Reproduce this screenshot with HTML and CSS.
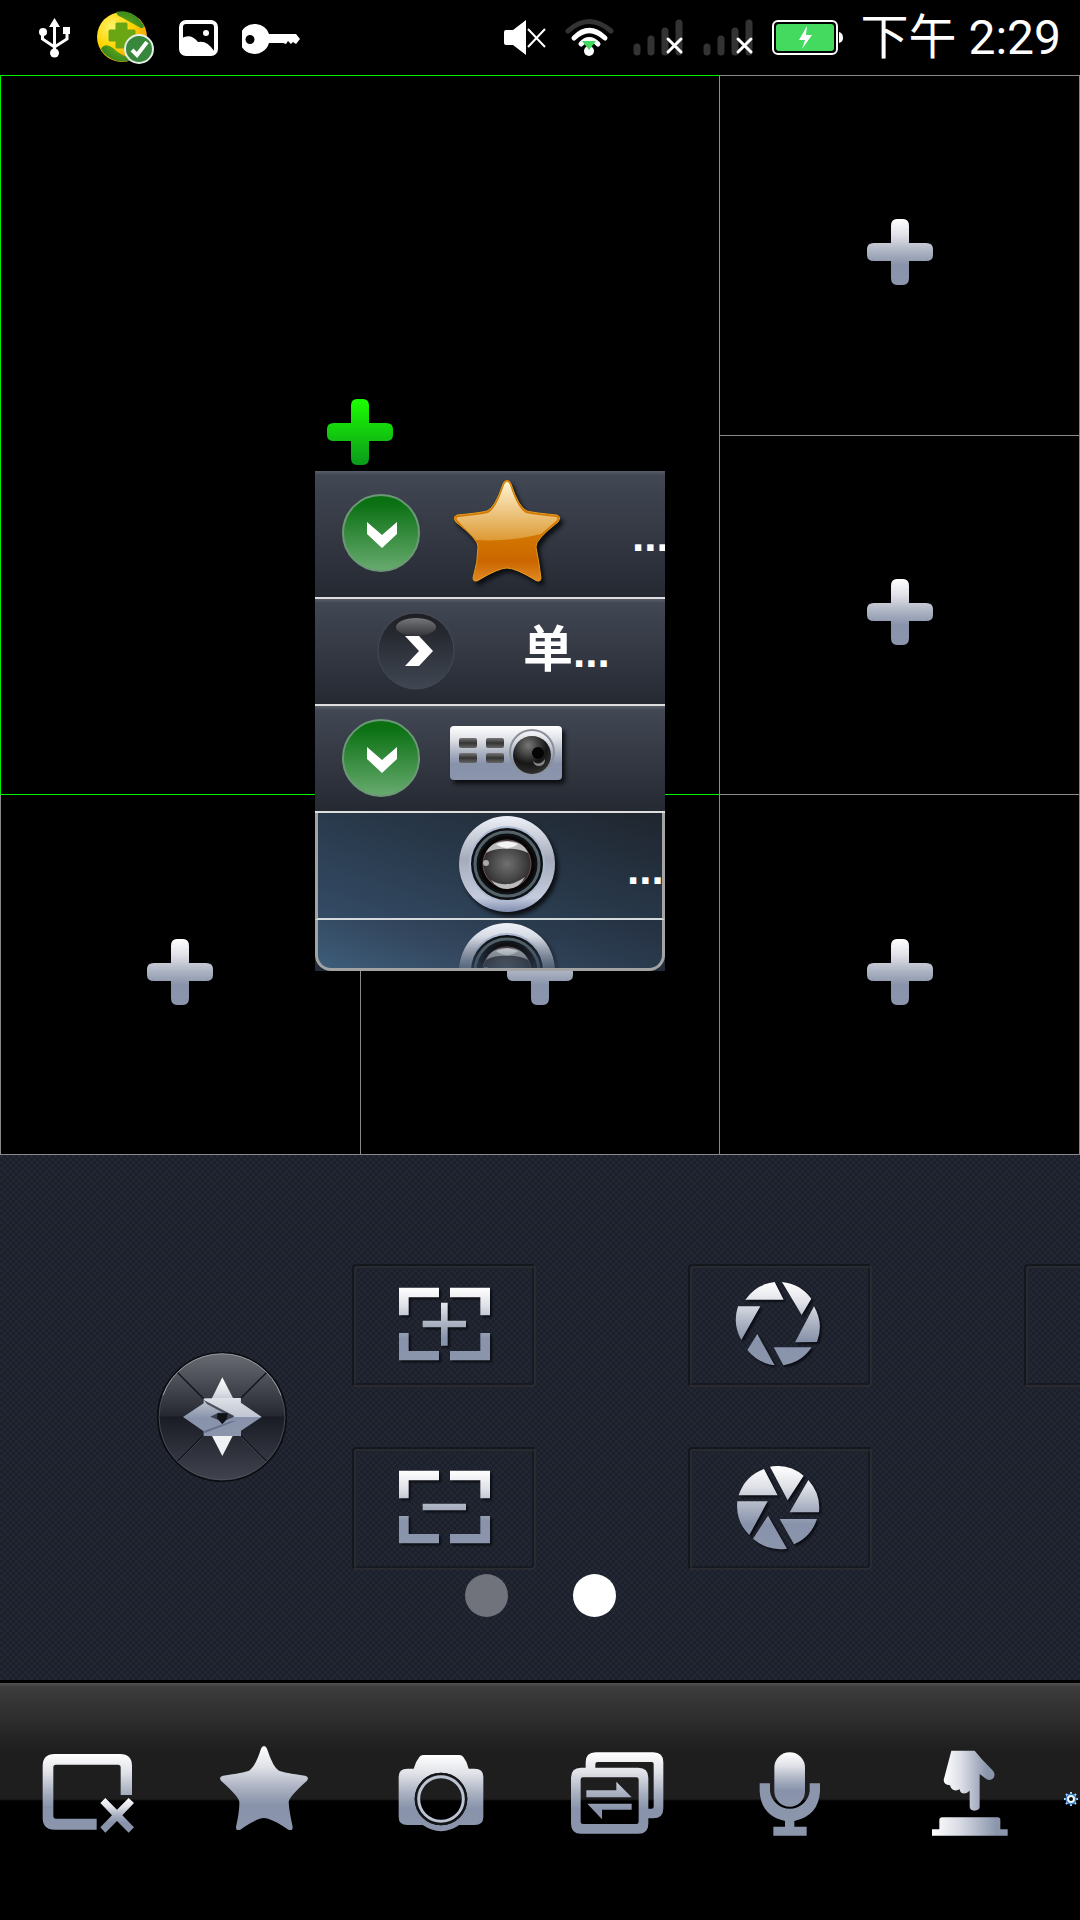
FILE: index.html
```html
<!DOCTYPE html>
<html lang="zh-CN">
<head>
<meta charset="utf-8">
<meta name="viewport" content="width=device-width, initial-scale=1">
<title>实时预览</title>
<link rel="stylesheet" href="styles.css">
</head>
<body>
<svg class="defs" width="0" height="0" aria-hidden="true">
  <defs>
    <linearGradient id="metal" x1="0" y1="0" x2="0" y2="1"><stop offset="0" stop-color="#fff"/><stop offset=".25" stop-color="#dfe1e7"/><stop offset=".5" stop-color="#aab1c1"/><stop offset=".7" stop-color="#8893ab"/><stop offset="1" stop-color="#8b96ad"/></linearGradient>
    <linearGradient id="metalX" x1="0" y1="0" x2="1" y2="0"><stop offset="0" stop-color="#fff"/><stop offset=".35" stop-color="#dadde5"/><stop offset=".85" stop-color="#8b96ad"/><stop offset="1" stop-color="#8b96ad"/></linearGradient>
    <linearGradient id="lime" x1="0" y1="0" x2="0" y2="1"><stop offset="0" stop-color="#1bff00"/><stop offset="1" stop-color="#0b9a1b"/></linearGradient>
    <linearGradient id="leaf" x1="0" y1="0" x2="0" y2="1"><stop offset=".1" stop-color="#0a7012"/><stop offset="1" stop-color="#68ab70"/></linearGradient>
    <linearGradient id="night" x1="0" y1="0" x2="0" y2="1"><stop offset="0" stop-color="#1d1e23"/><stop offset="1" stop-color="#404753"/></linearGradient>
    <linearGradient id="shine" x1="0" y1="0" x2="0" y2="1"><stop offset="0" stop-color="#77777b"/><stop offset="1" stop-color="#333439"/></linearGradient>
    <linearGradient id="goldTop" x1="0" y1="0" x2="0" y2="1"><stop offset="0" stop-color="#fff3d0"/><stop offset="1" stop-color="#dd9a35"/></linearGradient>
    <linearGradient id="goldLow" x1="0" y1="0" x2="0" y2="1"><stop offset=".5" stop-color="#d47a00"/><stop offset=".8" stop-color="#cb6600"/><stop offset="1" stop-color="#e08a25"/></linearGradient>
    <linearGradient id="key" x1="0" y1="0" x2="0" y2="1"><stop offset="0" stop-color="#777"/><stop offset=".5" stop-color="#333"/><stop offset="1" stop-color="#666"/></linearGradient>
    <linearGradient id="disc" x1="0" y1="0" x2="0" y2="1"><stop offset="0" stop-color="#6a6c74"/><stop offset=".49" stop-color="#252831"/><stop offset=".5" stop-color="#191c25"/><stop offset="1" stop-color="#41444e"/></linearGradient>
    <radialGradient id="knob" cx=".4" cy=".25" r=".8"><stop offset="0" stop-color="#777"/><stop offset=".6" stop-color="#161616"/><stop offset="1" stop-color="#333"/></radialGradient>
    <radialGradient id="ball"><stop offset="0" stop-color="#707070"/><stop offset=".7" stop-color="#444"/><stop offset="1" stop-color="#332c2d"/></radialGradient>
    <radialGradient id="sun" cx=".3" cy=".3" r=".8"><stop offset="0" stop-color="#fff36a"/><stop offset=".5" stop-color="#ffd400"/><stop offset="1" stop-color="#f29a00"/></radialGradient>
    <radialGradient id="grass"><stop offset="0" stop-color="#8abf10"/><stop offset="1" stop-color="#3a8a1e"/></radialGradient>
    <linearGradient id="rim" x1="0" y1="0" x2="0" y2="1"><stop offset="0" stop-color="#eef1f8"/><stop offset=".45" stop-color="#a5abbb"/><stop offset=".85" stop-color="#c4ccdd"/><stop offset="1" stop-color="#7f8cae"/></linearGradient>
    <symbol id="plus" viewBox="0 0 68 68"><path d="M25 8Q25 1 31 1H37Q43 1 43 8V25H60Q67 25 67 31V37Q67 43 60 43H43V60Q43 67 37 67H31Q25 67 25 60V43H8Q1 43 1 37V31Q1 25 8 25H25Z"/></symbol>
    <symbol id="open" viewBox="0 0 78 78"><circle cx="39" cy="39" r="38" fill="url(#leaf)" stroke="#6d9877" stroke-width="2"/><path d="M25 28L40 41L55 28V40L40 54L25 40Z" fill="#fff"/></symbol>
    <symbol id="lens" viewBox="0 0 116 100">
      <circle cx="58" cy="49" r="48" fill="url(#rim)"/>
      <circle cx="58" cy="49" r="37" fill="#0e1013" stroke="#aebbd3" stroke-width="2"/>
      <circle cx="58" cy="49" r="32" fill="none" stroke="#54636a" stroke-width="3"/>
      <circle cx="58" cy="49" r="28" fill="#090607"/>
      <circle cx="58" cy="49" r="24" fill="url(#ball)" stroke="#655" stroke-width="1"/>
      <path d="M37 38Q42 26 58 26Q74 26 79 38Q68 33 58 34Q47 33 37 38Z" fill="#bbb"/><path d="M47 29Q58 24 69 29Q64 33 58 33Q52 33 47 29Z" fill="#f4f4f4"/>
      <path d="M42 65Q58 75 76 62Q70 74 58 74Q48 74 42 65Z" fill="#bbb"/><circle cx="37" cy="48" r="3" fill="#aaa"/>
    </symbol>
    <symbol id="signal" viewBox="0 0 52 76"><g stroke="#333" stroke-width="7" stroke-linecap="round"><path d="M5 47V52M19 39V52M33 31V52M47 23V52"/></g><path d="M36 39L49 52M49 39L36 52" stroke="#fff" stroke-width="3" stroke-linecap="round"/></symbol>
  </defs>
</svg>

<div class="screen">
  <header class="status">
    <div class="status-group notices">
      <svg width="34" height="76" viewBox="0 0 34 76" aria-label="USB"><g fill="none" stroke="#fff" stroke-width="3"><path d="M15.500 24V52M3.500 33V39L15.500 47L28 39V31"/></g><path d="M15.500 18L21 27H10Z" fill="#fff"/><circle cx="4" cy="32" r="4" fill="#fff"/><circle cx="15.500" cy="53" r="4.500" fill="#fff"/><path d="M24 27H31V34H24Z" fill="#fff"/></svg>
      <svg width="58" height="76" viewBox="0 0 58 76" aria-label="安全卫士"><circle cx="25" cy="37" r="25" fill="url(#sun)"/><path d="M19 12Q36 8 47 26Q46 30 42 27Q33 22 24 17Q20 16 19 12ZM4 49Q8 42 16 48Q24 56 35 58Q32 63 20 61Q8 57 4 49Z" fill="url(#grass)"/><path d="M20 24H29V31H37V40H29V47H20V40H13V31H20Z" fill="#6aa614" stroke="#6aa614" stroke-width="3" stroke-linejoin="round"/><circle cx="42" cy="49" r="14" fill="#37883c" stroke="#e4eee4" stroke-width="2"/><path d="M35 50L40 55L50 42" fill="none" stroke="#fff" stroke-width="4"/></svg>
      <svg width="39" height="76" viewBox="0 0 39 76" aria-label="截图"><rect x="2" y="22" width="35" height="32" rx="5" fill="none" stroke="#fff" stroke-width="4"/><path d="M3 38Q12 33 19 42Q28 40 35 51V54H3Z" fill="#fff"/><circle cx="27" cy="33" r="3" fill="#fff"/></svg>
      <svg width="59" height="76" viewBox="0 0 59 76" aria-label="VPN"><path fill="#fff" fill-rule="evenodd" d="M14 24A15 15 0 0 1 27 34H54L58 39L54 44L51 42L49 44L46 41L44 44L41 43H27A15 15 0 1 1 14 24ZM8 35A4.500 4.500 0 1 0 8 44A4.500 4.500 0 1 0 8 35Z"/></svg>
    </div>
    <div class="status-group">
      <svg width="43" height="76" viewBox="0 0 43 76" aria-label="静音"><path d="M2 30H9L22 20V55L9 45H2Q0 45 0 43V32Q0 30 2 30Z" fill="#fff"/><path d="M24 29L41 47M41 29L24 47" stroke="#fff" stroke-width="2"/></svg>
      <svg width="49" height="76" viewBox="0 0 49 76" aria-label="WLAN"><g fill="none" stroke-width="5" stroke-linecap="round"><path d="M3 31Q24 12 46 31" stroke="#333"/><path d="M9 38Q24 23 40 38" stroke="#fff"/><path d="M16 44Q24 35 33 44" stroke="#fff"/></g><circle cx="24" cy="51" r="5" fill="#fff"/><path d="M17 41H31L24 50Z" fill="#43da5f"/></svg>
      <svg width="52" height="76" aria-label="无信号"><use href="#signal"/></svg>
      <svg width="52" height="76" aria-label="无信号"><use href="#signal"/></svg>
      <svg width="71" height="76" viewBox="0 0 71 76" aria-label="充电中"><rect x="1" y="21" width="64" height="33" rx="5" fill="none" stroke="#fff" stroke-width="2"/><rect x="4" y="24" width="58" height="27" rx="3" fill="#43da5f"/><path d="M67 32Q71 33 71 38Q71 42 67 43Z" fill="#fff"/><path d="M35 26L27 40H33L30 49L40 35H34Z" fill="#fff"/></svg>
      <time class="clock">下午 2:29</time>
    </div>
  </header>

  <main class="monitor">
    <div class="views">
      <button class="view view-active" aria-label="添加画面 1"><svg class="plus plus-active"><use href="#plus"/></svg></button>
      <button class="view" aria-label="添加画面 2"><svg class="plus"><use href="#plus"/></svg></button>
      <button class="view" aria-label="添加画面 3"><svg class="plus"><use href="#plus"/></svg></button>
      <button class="view" aria-label="添加画面 4"><svg class="plus"><use href="#plus"/></svg></button>
      <button class="view" aria-label="添加画面 5"><svg class="plus"><use href="#plus"/></svg></button>
      <button class="view" aria-label="添加画面 6"><svg class="plus"><use href="#plus"/></svg></button>
    </div>

    <ul class="devices">
      <li class="device group favorite">
        <svg class="toggle"><use href="#open"/></svg>
        <svg class="picture" viewBox="0 0 116 112">
          <path d="M58 4Q61 4 62 8Q70 32 78 35Q86 37 108 39Q114 41 109 46Q86 64 87 71Q90 86 92 102Q92 107 87 105Q66 92 58 92Q50 92 29 105Q24 107 24 102Q29 86 29 71Q30 64 7 46Q2 41 8 39Q30 37 38 35Q46 32 54 8Q55 4 58 4Z" fill="url(#goldLow)"/>
          <path d="M58 6Q60 6 61 9Q69 33 77 37Q86 39 107 41Q110 42 107 45L92 58Q60 66 27 64L9 45Q6 42 9 41Q30 39 39 37Q47 33 55 9Q56 6 58 6Z" fill="url(#goldTop)"/>
          <path d="M58 5Q61 5 62 8Q70 32 78 35Q86 37 108 39Q112 41 109 46Q86 64 87 71Q90 86 92 102Q92 106 87 104Q66 92 58 92Q50 92 29 104Q24 106 24 102Q29 86 29 71Q30 64 7 46Q4 41 8 39Q30 37 38 35Q46 32 54 8Q55 5 58 5Z" fill="none" stroke="#e39a1e" stroke-width="1"/>
        </svg>
        <span class="name name-far"><span class="more">...</span></span>
      </li>
      <li class="device group nested">
        <svg class="toggle" viewBox="0 0 78 78"><circle cx="39" cy="39" r="38" fill="url(#night)" stroke="#454a55"/><ellipse cx="39" cy="15" rx="20" ry="9" fill="url(#shine)"/><path d="M28 24H42L56 39L42 54H28L42 39Z" fill="#fff"/></svg>
        <span class="name name-near">单<span class="more">...</span></span>
      </li>
      <li class="device group">
        <svg class="toggle"><use href="#open"/></svg>
        <svg class="picture" viewBox="0 0 116 90">
          <rect x="1" y="14" width="112" height="54" rx="4" fill="url(#metal)"/>
          <g fill="url(#key)"><rect x="10" y="26" width="18" height="10" rx="2"/><rect x="37" y="26" width="18" height="10" rx="2"/><rect x="10" y="41" width="18" height="10" rx="2"/><rect x="37" y="41" width="18" height="10" rx="2"/></g>
          <circle cx="83" cy="40" r="22" fill="none" stroke="#8c909a" stroke-width="2"/><circle cx="83" cy="43" r="19" fill="url(#knob)"/><circle cx="89" cy="41" r="6" fill="#050505"/><path d="M84 49Q90 55 96 47Q96 54 90 54Q85 54 84 49Z" fill="#888"/>
        </svg>
      </li>
      <li class="device camera"><svg class="picture"><use href="#lens"/></svg><span class="name name-cam"><span class="more">...</span></span></li>
      <li class="device camera last"><svg class="picture"><use href="#lens"/></svg></li>
    </ul>
  </main>

  <section class="controls">
    <div class="control-row">
      <button class="joystick" aria-label="云台">
        <svg viewBox="0 0 390 390">
          <circle cx="195" cy="195" r="192" fill="url(#disc)" stroke="#0c0d12" stroke-width="6"/>
          <circle cx="195" cy="195" r="189" fill="none" stroke="#5d5f68" stroke-width="2"/>
          <path d="M18 130A188 188 0 0 1 372 130" fill="none" stroke="#9b9ca2" stroke-width="3"/>
          <path d="M62 62L140 140M328 62L250 140M62 328L140 250M328 328L250 250" stroke="#11131a" stroke-width="4"/><path d="M62 331L140 253M328 331L250 253" stroke="#4c505e" stroke-width="2"/>
          <path d="M196 312L164 250H228Z" fill="#f0f1f4"/>
          <path d="M196 76L228 138H252V152L314 195L252 236V252H140V238L78 195L140 154V140H164Z" fill="url(#metal)"/>
          <path d="M142 138H250V152L314 195H232L142 144Z" fill="#f4f5f8" opacity=".5"/>
          <path d="M140 144L232 192L220 194L150 156Z" fill="#4b505c"/><path d="M160 194L184 182H210L232 194L208 204L196 216L184 204Z" fill="#3b4150"/><path d="M182 184H212L210 200L196 216L180 198Z" fill="#101218"/><path d="M142 244L238 206L222 208L142 236Z" fill="#66718a"/>
        </svg>
      </button>
      <div class="keys">
        <button class="key" aria-label="变倍加"><svg viewBox="0 0 552 369"><path fill="url(#metal)" d="M141 71H261V100H170V154H141ZM294 71H414V154H385V100H294ZM141 207H170V261H261V289H141ZM414 207H385V261H294V289H414ZM267 116H287V170H342V190H287V245H267V190H212V170H267Z"/></svg></button>
        <button class="key" aria-label="光圈加"><svg viewBox="0 0 552 369"><path fill="url(#metal)" d="M172 107A125 125 0 0 1 260 54L287 107ZM282 54A125 125 0 0 1 370 104L341 153ZM378 127A125 125 0 0 1 387 234L321 235ZM371 250A125 125 0 0 1 286 304L257 250ZM260 304A125 125 0 0 1 178 258L208 210ZM160 228A125 125 0 0 1 150 127L217 127Z"/></svg></button>
        <button class="key" aria-label="预置点"></button>
        <button class="key" aria-label="变倍减"><svg viewBox="0 0 552 369"><path fill="url(#metal)" d="M141 71H261V100H170V154H141ZM294 71H414V154H385V100H294ZM141 207H170V261H261V289H141ZM414 207H385V261H294V289H414ZM212 170H342V190H212Z"/></svg></button>
        <button class="key" aria-label="光圈减"><svg viewBox="0 0 552 369"><path fill="url(#metal)" d="M152 145A125 125 0 0 1 228 66L269 145ZM246 59A125 125 0 0 1 347 86L299 160ZM361 99A125 125 0 0 1 393 196L305 196ZM387 216A125 125 0 0 1 318 292L275 216ZM297 305A125 125 0 0 1 195 275L240 206ZM184 264A125 125 0 0 1 148 163L239 163Z"/></svg></button>
      </div>
    </div>
    <div class="pages"><button class="dot" aria-label="第 1 页"></button><button class="dot dot-on" aria-label="第 2 页"></button></div>
  </section>

  <nav class="toolbar">
    <button class="tool" aria-label="关闭画面"><svg viewBox="0 0 303 300"><path fill="url(#metal)" d="M50 30H246Q282 30 282 66V153H248V70Q248 62 240 62H54Q46 62 46 70V216Q46 224 54 224H176V257H50Q14 257 14 221V66Q14 30 50 30Z"/><path fill="url(#metal)" d="M202 162L237 197L272 162L288 177L253 214L288 250L272 266L237 231L202 266L187 250L222 214L187 177Z"/></svg></button>
    <button class="tool" aria-label="收藏"><svg viewBox="0 0 303 300"><path fill="url(#metal)" d="M147 6Q153 6 156 14Q174 70 192 80Q208 86 270 95Q284 98 276 110Q222 158 221 174Q222 200 233 248Q234 262 220 257Q168 222 147 222Q126 222 76 257Q62 262 63 248Q74 200 73 174Q72 158 18 110Q10 98 24 95Q86 86 102 80Q120 70 138 14Q141 6 147 6Z"/></svg></button>
    <button class="tool" aria-label="抓图"><svg viewBox="0 0 303 300"><path fill="url(#metal)" fill-rule="evenodd" d="M65 74Q70 54 82 39Q86 33 94 33H202Q210 33 214 39Q226 54 230 74H248Q274 74 274 98V219Q274 243 248 243H202Q147 280 92 243H46Q20 243 20 219V98Q20 74 46 74ZM147 86A79 79 0 1 0 147 244A79 79 0 1 0 147 86Z"/><circle cx="147" cy="165" r="76" fill="none" stroke="#15161a" stroke-width="6"/><circle cx="147" cy="165" r="67" fill="none" stroke="#bcc4d4" stroke-width="9"/></svg></button>
    <button class="tool" aria-label="切换窗口"><svg viewBox="0 0 303 300"><path fill="url(#metal)" fill-rule="evenodd" d="M50 71V55Q50 25 80 25H253Q283 25 283 55V193Q283 223 253 223H238V194H248Q254 194 254 188V60Q254 54 248 54H86Q79 54 79 60V71ZM36 71H208Q238 71 238 101V239Q238 269 208 269H36Q6 269 6 239V101Q6 71 36 71ZM42 100Q35 100 35 107V233Q35 240 42 240H202Q209 240 209 233V107Q209 100 202 100ZM52 139H142V113L188 160H52ZM188 179H55L99 226V197H188Z"/></svg></button>
    <button class="tool" aria-label="对讲"><svg viewBox="0 0 303 300"><rect x="85" y="25" width="92" height="163" rx="46" fill="url(#metal)"/><path fill="#8b96ad" d="M41 118H72V142A60 60 0 0 0 191 142V118H222V142Q218 216 145 231V248H182V275H82V248H117V231Q45 216 41 142Z"/></svg></button>
    <button class="tool" aria-label="手动报警"><svg viewBox="0 0 303 300"><path fill="url(#metalX)" d="M85 20H155L176 45L210 80Q218 90 212 101Q202 112 190 105L170 90V190Q168 200 154 200Q140 200 140 186V140Q130 150 120 148Q112 148 110 136Q100 142 90 137Q82 132 81 124Q62 122 62 108Z"/><path fill="url(#metalX)" d="M58 220H224Q232 220 232 228V256H254V275H27V256H49V228Q49 220 58 220Z"/></svg></button>
    <button class="tool tool-edge" aria-label="设置"><svg viewBox="0 0 18 18"><path d="M9 2V16M2 9H16M4 4L14 14M14 4L4 14" stroke="#b8d4f0" stroke-width="2"/><circle cx="9" cy="9" r="4" fill="#111" stroke="#2f7fd0" stroke-width="3"/><circle cx="9" cy="9" r="3" fill="#111" stroke="#f3f7fc" stroke-width="2"/></svg></button>
  </nav>
</div>
</body>
</html>
```
FILE: styles.css
```css
* { box-sizing: border-box; }

body {
  margin: 0;
  background: #000;
  color: #fff;
  font-family: Roboto, "Noto Sans CJK SC", sans-serif;
}

.defs { position: absolute; }

button {
  margin: 0;
  padding: 0;
  border: 0;
  background: none;
  color: inherit;
}

svg { display: block; flex: none; }

.screen {
  display: flex;
  flex-direction: column;
  min-height: 100vh;
  overflow: hidden;
}

/* Status bar */
.status {
  display: flex;
  justify-content: space-between;
  height: 75px;
  padding: 0 19px 0 39px;
}

.status-group {
  display: flex;
  align-items: center;
  gap: 18px;
}

.notices { gap: 24px; }

.clock {
  font-size: 48px;
  line-height: 75px;
  white-space: nowrap;
}

/* Video grid */
.monitor { position: relative; }

.views {
  display: grid;
  grid-template: repeat(3, 1fr) / repeat(3, 1fr);
  gap: 1px;
  aspect-ratio: 1;
  padding: 1px;
}

.view {
  display: flex;
  align-items: center;
  justify-content: center;
  background: #000;
  box-shadow: 0 0 0 1px #8a8a8a;
}

.view-active {
  z-index: 1;
  grid-area: 1 / 1 / 3 / 3;
  box-shadow: 0 0 0 1px #00f000;
}

.plus {
  width: 68px;
  height: 68px;
  margin-bottom: 6px;
  fill: url(#metal);
}

.plus-active { fill: url(#lime); }

/* Floating device list */
.devices {
  position: absolute;
  z-index: 2;
  top: 396px;
  left: 315px;
  width: 350px;
  margin: 0;
  padding: 0;
  list-style: none;
  background: #222a38;
}

.device {
  display: flex;
  align-items: center;
  height: 107px;
  border-bottom: 2px solid #dedede;
  overflow: hidden;
}

.group {
  padding: 0 0 2px 27px;
  background: linear-gradient(#5a606b 0, #414753 4px, #252932 100%);
}

.favorite { height: 128px; }

.nested { padding-left: 62px; }

.toggle {
  width: 78px;
  height: 78px;
}

.picture {
  width: 116px;
  height: 112px;
  margin: 0 0 2px 29px;
  filter: drop-shadow(3px 4px 2px #0c0e12);
}

.group:not(.favorite) .picture { height: 90px; }

.name {
  flex: none;
  font-size: 50px;
  font-weight: 700;
  line-height: 60px;
  white-space: nowrap;
}

.more {
  font-family: "Liberation Sans", sans-serif;
  font-size: 44px;
}

.name-near { margin-left: 68px; }

.name-far {
  margin-left: 67px;
  padding-top: 4px;
}

.name-cam {
  margin-left: 62px;
  padding-top: 4px;
}

.camera {
  padding-left: 102px;
  border-right: 3px solid #a3a3a3;
  border-left: 3px solid #a3a3a3;
  border-bottom-color: #d5dadd;
  background: linear-gradient(20deg, #344b66, #293a4c 45%, #1f252e);
}

.camera .picture { height: 100px; }

.last {
  align-items: flex-start;
  height: 51px;
  border-bottom: 3px solid #a3a3a3;
  border-radius: 0 0 16px 16px;
  background: linear-gradient(20deg, #3d5d7a, #33465d 40%, #233040);
}

.last .picture {
  margin-top: 2px;
  mask-image: linear-gradient(#000 15px, transparent 60px);
}

/* Camera controls */
.controls {
  flex: 1;
  display: flex;
  flex-direction: column;
  gap: 4px;
  padding: 109px 0 62px 157px;
  background: conic-gradient(#1c202a 25%, #232733 0 50%, #1c202a 0 75%, #232733 0) 0 0 / 6px 6px;
}

.control-row {
  display: flex;
  align-items: center;
  gap: 65px;
}

.joystick,
.joystick svg {
  flex: none;
  width: 130px;
  height: 130px;
}

.keys {
  display: grid;
  flex: none;
  grid-template-columns: repeat(3, 184px);
  gap: 60px 152px;
}

.key {
  height: 123px;
  border: 2px solid #14171e;
  border-right-color: #292b30;
  border-bottom-color: #292b30;
  border-radius: 4px;
  box-shadow: inset 2px 2px #272a2f, inset -2px -2px #171a21;
}

.key svg {
  width: 184px;
  height: 123px;
  margin: -2px;
  filter: drop-shadow(2px 2px 1px #0a0c12);
}

.pages {
  display: flex;
  justify-content: center;
  gap: 65px;
  margin-left: -157px;
}

.dot {
  width: 43px;
  height: 43px;
  border-radius: 50%;
  background: #70737b;
}

.dot-on { background: #fff; }

/* Bottom toolbar */
.toolbar {
  display: flex;
  align-items: center;
  height: 240px;
  padding-bottom: 15px;
  border-top: 3px solid #000;
  background: linear-gradient(#525252 0, #3c3c3c 4px, #1e1e1e 68px, #1e1e1e 116px, #000 118px);
}

.tool {
  display: flex;
  flex: 177 1 0;
  justify-content: center;
}

.tool svg {
  width: 101px;
  height: 100px;
}

.tool-edge {
  flex-grow: 18;
  padding-top: 10px;
}

.tool-edge svg {
  width: 18px;
  height: 18px;
}
```
